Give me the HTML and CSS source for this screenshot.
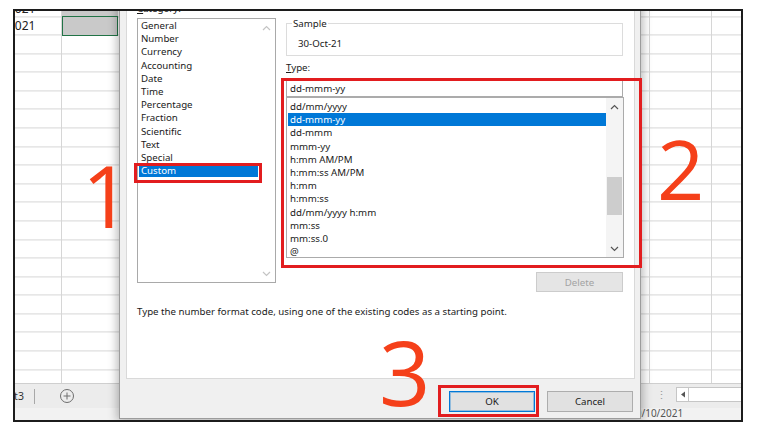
FILE: index.html
```html
<!DOCTYPE html>
<html>
<head>
<meta charset="utf-8">
<link rel="stylesheet" href="styles.css">
</head>
<body>
<div class="frame">
  <div class="sheet">
    <div class="cells">
      <div class="row r1"><div class="ca">2021</div><div class="cb"></div></div>
      <div class="row"><div class="ca">2021</div><div class="cb sel"></div></div>
    </div>
    <div class="tabbar">
      <div class="tabs-left">
        <span class="tab">Sheet3</span>
        <span class="tsep"></span>
        <svg class="addsheet" width="16" height="16" viewBox="0 0 16 16"><circle cx="8" cy="8" r="6.5" fill="none" stroke="#6e6e6e" stroke-width="1"/><path d="M8 4.5v7M4.5 8h7" stroke="#6e6e6e" stroke-width="1"/></svg>
      </div>
      <div class="hscroll">
        <span class="dots">⋮</span>
        <span class="hbtn"><svg width="6" height="7" viewBox="0 0 6 7"><path d="M5 0.5v6L1 3.5z" fill="#555"/></svg></span>
        <span class="hfield"></span>
      </div>
    </div>
    <div class="status"><span class="stext">30/10/2021</span></div>
  </div>

  <div class="dialog">
    <div class="panel">
      <div class="panel-top">
        <div class="col-left">
          <div class="lbl"><u>C</u>ategory:</div>
          <div class="catlist">
            <div class="items">
              <div class="item">General</div>
              <div class="item">Number</div>
              <div class="item">Currency</div>
              <div class="item">Accounting</div>
              <div class="item">Date</div>
              <div class="item">Time</div>
              <div class="item">Percentage</div>
              <div class="item">Fraction</div>
              <div class="item">Scientific</div>
              <div class="item">Text</div>
              <div class="item">Special</div>
              <div class="item active">Custom</div>
            </div>
            <div class="vscroll light">
              <div class="arrow"><svg width="9" height="6" viewBox="0 0 9 6"><path d="M1 5L4.5 1.5L8 5" fill="none" stroke="#c4c4c4" stroke-width="1.2"/></svg></div>
              <div class="track"></div>
              <div class="arrow"><svg width="9" height="6" viewBox="0 0 9 6"><path d="M1 1L4.5 4.5L8 1" fill="none" stroke="#c4c4c4" stroke-width="1.2"/></svg></div>
            </div>
          </div>
        </div>
        <div class="col-right">
          <fieldset class="sample">
            <legend>Sample</legend>
            <div class="sample-val">30-Oct-21</div>
          </fieldset>
          <div class="lbl type-lbl"><u>T</u>ype:</div>
          <div class="textbox">dd-mmm-yy</div>
          <div class="typelist">
            <div class="items">
              <div class="item">dd/mm/yyyy</div>
              <div class="item active">dd-mmm-yy</div>
              <div class="item">dd-mmm</div>
              <div class="item">mmm-yy</div>
              <div class="item">h:mm AM/PM</div>
              <div class="item">h:mm:ss AM/PM</div>
              <div class="item">h:mm</div>
              <div class="item">h:mm:ss</div>
              <div class="item">dd/mm/yyyy h:mm</div>
              <div class="item">mm:ss</div>
              <div class="item">mm:ss.0</div>
              <div class="item">@</div>
            </div>
            <div class="vscroll">
              <div class="arrow"><svg width="9" height="6" viewBox="0 0 9 6"><path d="M1 5L4.5 1.5L8 5" fill="none" stroke="#555" stroke-width="1.2"/></svg></div>
              <div class="track"><div class="thumb"></div></div>
              <div class="arrow"><svg width="9" height="6" viewBox="0 0 9 6"><path d="M1 1L4.5 4.5L8 1" fill="none" stroke="#555" stroke-width="1.2"/></svg></div>
            </div>
          </div>
          <div class="btn-row"><span class="btn disabled">Delete</span></div>
        </div>
      </div>
      <div class="desc">Type the number format code, using one of the existing codes as a starting point.</div>
    </div>
    <div class="footer">
      <span class="btn default">OK</span>
      <span class="btn">Cancel</span>
    </div>
  </div>

  <div class="hl hl1"></div>
  <div class="hl hl2"></div>
  <div class="hl hl3"></div>
  <div class="num n1">1</div>
  <div class="num n2">2</div>
  <div class="num n3">3</div>
</div>
</body>
</html>
```

FILE: styles.css
```css
html, body {
  margin: 0;
  padding: 0;
  background: #fff;
}
body {
  font-family: "Noto Sans", "Open Sans", sans-serif;
}
.frame {
  margin: 9px 0 0 13px;
  width: 730px;
  height: 413px;
  box-sizing: border-box;
  border: 2px solid #1c1c1c;
  position: relative;
  overflow: hidden;
  background: #fff;
}
.sheet {
  display: flex;
  flex-direction: column;
  height: 100%;
}
.cells {
  flex: 1;
  min-height: 0;
  overflow: hidden;
  background-image:
    linear-gradient(to right, transparent 46px, #d6d6d6 46px 47px, transparent 47px 634px, #d6d6d6 634px 635px, transparent 635px 696px, #d6d6d6 696px 697px, transparent 697px),
    repeating-linear-gradient(to bottom, transparent 0 17.58px, #d6d6d6 17.58px 18.58px);
  background-position: 0 0, 0 -12.58px;
}
.row {
  display: flex;
  height: 18.58px;
}
.r1 { margin-top: -12.58px; }
.r1 .ca { padding-top: 2px; box-sizing: border-box; }
.ca {
  width: 47px;
  font-size: 12px;
  line-height: 18.58px;
  color: #222;
  text-indent: -7px;
  white-space: nowrap;
}
.cb {
  width: 56px;
  background: #c9c9c9;
  box-sizing: border-box;
}
.cb.sel {
  border: 1px solid #217346;
  margin-top: -1px;
  height: 19.58px;
}
.tabbar {
  flex: none;
  height: 25px;
  box-sizing: border-box;
  border-top: 1px solid #cfcfcf;
  background: #ececec;
  display: flex;
  justify-content: space-between;
  align-items: center;
}
.tabs-left {
  display: flex;
  align-items: center;
}
.tab {
  font-size: 10.5px;
  color: #333;
  margin-left: -25px;
}
.tsep {
  width: 1px;
  height: 15px;
  background: #a8a8a8;
  margin-left: 10px;
}
.addsheet {
  margin-left: 24px;
}
.hscroll {
  display: flex;
  align-items: center;
  margin-top: -3px;
}
.dots {
  font-size: 11px;
  color: #999;
  margin-right: 9px;
}
.hbtn {
  width: 13px;
  height: 15px;
  box-sizing: border-box;
  border: 1px solid #c6c6c6;
  background: #fff;
  display: flex;
  align-items: center;
  justify-content: center;
}
.hfield {
  width: 52px;
  height: 15px;
  box-sizing: border-box;
  border: 1px solid #c6c6c6;
  border-left: none;
  border-right: none;
  background: #fff;
}
.status {
  flex: none;
  height: 12px;
  background: #f2f2f2;
  font-size: 10px;
  line-height: 10px;
  color: #555;
}
.stext {
  margin-left: 615px;
}

/* dialog */
.dialog {
  position: absolute;
  left: 104px;
  top: -31px;
  bottom: 1px;
  width: 522px;
  box-sizing: border-box;
  background: #f0f0f0;
  border: 1px solid #9c9c9c;
  box-shadow: 0 0 9px 2px rgba(0, 0, 0, 0.28);
  display: flex;
  flex-direction: column;
  font-size: 9.7px;
  color: #1a1a1a;
}
.panel {
  flex: 1;
  margin: 0 5px 0 6px;
  background: #fff;
  border: 1px solid #d9d9d9;
  border-top: none;
  padding: 21px 0 0 10px;
}
.panel-top {
  display: flex;
  gap: 10px;
}
.col-left {
  width: 139px;
}
.lbl {
  height: 13px;
  line-height: 13px;
  margin-bottom: 3px;
}
.catlist {
  height: 265px;
  box-sizing: border-box;
  border: 1px solid #a9a9a9;
  display: flex;
}
.items {
  flex: 1;
  padding-left: 1px;
}
.item {
  height: 13.2px;
  line-height: 13.2px;
  padding-left: 2px;
  white-space: nowrap;
}
.item.active {
  background: #0078d7;
  color: #fff;
}
.vscroll {
  width: 17px;
  display: flex;
  flex-direction: column;
  background: #f4f4f4;
}
.vscroll.light {
  background: #fff;
}
.arrow {
  height: 17px;
  display: flex;
  align-items: center;
  justify-content: center;
}
.track {
  flex: 1;
}
.thumb {
  margin: 62px 1px 0 1px;
  height: 38px;
  background: #cdcdcd;
}
.col-right {
  width: 337px;
}
.sample {
  margin: 15px 0 0 0;
  padding: 7px 0 5px 11px;
  border: 1px solid #dcdcdc;
  min-width: 0;
}
.sample legend {
  margin-left: -6px;
  padding: 0 1px;
  line-height: 13px;
}
.sample-val {
  line-height: 13px;
}
.type-lbl {
  margin: 5px 0 0 0;
}
.textbox {
  margin-top: 6px;
  height: 17px;
  box-sizing: border-box;
  border: 1px solid #ababab;
  padding-left: 3px;
  line-height: 15px;
}
.typelist {
  width: 338px;
  height: 161px;
  box-sizing: border-box;
  border: 1px solid #ababab;
  display: flex;
}
.typelist .items {
  padding-top: 2px;
}
.btn-row {
  display: flex;
  justify-content: flex-end;
  margin-top: 14px;
}
.btn {
  width: 86px;
  height: 21px;
  box-sizing: border-box;
  border: 1px solid #adadad;
  background: #e1e1e1;
  display: flex;
  align-items: center;
  justify-content: center;
}
.btn.disabled {
  width: 87px;
  height: 20px;
  border-color: #cccccc;
  background: #e5e5e5;
  color: #a3a3a3;
}
.btn.default {
  border-color: #0078d7;
  box-shadow: inset 0 0 0 1px rgba(0, 120, 215, 0.35);
}
.desc {
  margin-top: 13px;
  line-height: 13px;
  white-space: nowrap;
}
.footer {
  height: 39px;
  box-sizing: border-box;
  padding: 12px 7px 0 0;
  display: flex;
  justify-content: flex-end;
  gap: 12px;
}

/* annotations */
.hl {
  position: absolute;
  border: 3px solid #e21d1f;
  box-sizing: border-box;
}
.hl1 { left: 119px; top: 152px; width: 128px; height: 20px; }
.hl2 { left: 266px; top: 67px; width: 361px; height: 190px; }
.hl3 { left: 423px; top: 374px; width: 101px; height: 32px; }
.num {
  position: absolute;
  font-family: "Open Sans", "Noto Sans", sans-serif;
  font-size: 86px;
  line-height: 1;
  color: #f5401a;
}
.n1 { left: 67px; top: 141px; }
.n2 { left: 642px; top: 115px; font-size: 83px; }
.n3 { left: 364px; top: 315px; font-size: 90px; }
```
